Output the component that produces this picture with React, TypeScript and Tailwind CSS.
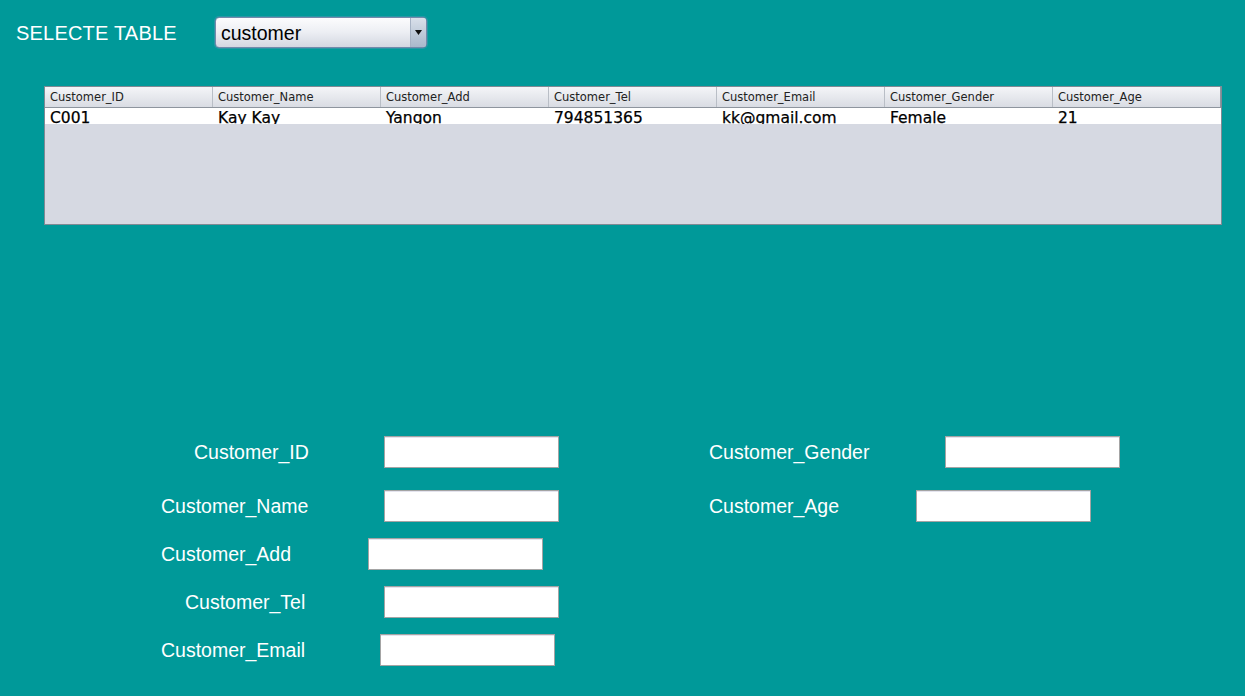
import React from "react";

const cols = [
  ["Customer_ID", "C001"],
  ["Customer_Name", "Kay Kay"],
  ["Customer_Add", "Yangon"],
  ["Customer_Tel", "794851365"],
  ["Customer_Email", "kk@gmail.com"],
  ["Customer_Gender", "Female"],
  ["Customer_Age", "21"],
];

function Box() {
  return (
    <div className="w-[175px] h-[32px] bg-white border border-[#a4a4a4] shadow-[inset_0_1px_0_#e4e4ee]" />
  );
}

export default function App() {
  return (
    <div
      className="w-[1245px] h-[696px] bg-[#009999] overflow-hidden flex flex-col"
      style={{ fontFamily: '"Liberation Sans", Arial, sans-serif' }}
    >
      {/* top row */}
      <div className="flex items-center pt-[17px] pl-[16px]">
        <div className="w-[199px] text-white text-[20px] tracking-[0.2px] leading-none pt-[1px]">SELECTE TABLE</div>
        <div className="w-[212px] h-[31px] rounded-[4px] border border-[#7389ab] bg-gradient-to-b from-[#fcfcfd] via-[#eceef3] to-[#d3d7e1] flex items-stretch overflow-hidden shadow-[0_0_0_1px_rgba(120,150,190,0.35)]">
          <div className="flex-1 flex items-center pl-[5px] pt-[2px] text-[19.5px] text-black leading-none">
            customer
          </div>
          <div className="w-[16px] border-l border-[#a6b2c4] bg-gradient-to-b from-[#d9e0ea] to-[#a9b8cb] flex items-center justify-center">
            <svg width="7" height="5" viewBox="0 0 7 5">
              <polygon points="0,0 7,0 3.5,5" fill="#111" />
            </svg>
          </div>
        </div>
      </div>

      {/* table */}
      <div className="mt-[38px] ml-[44px] w-[1178px] h-[139px] border border-[#7f8a94] bg-[#d6d9e2] flex flex-col">
        <div className="flex h-[21px] border-b border-[#8e959e] bg-gradient-to-b from-[#f4f5f8] to-[#d9dce3]">
          {cols.map(([h], i) => (
            <div
              key={h}
              className={
                "w-[168px] flex items-center pl-[5px] pt-[1px] text-[11.5px] text-[#222] border-r " +
                (i === cols.length - 1 ? "border-[#8e959e]" : "border-[#b9bec6]")
              }
              style={{ fontFamily: '"DejaVu Sans", sans-serif' }}
            >
              {h}
            </div>
          ))}
        </div>
        <div className="flex h-[16px] bg-white overflow-hidden">
          {cols.map(([h, v]) => (
            <div
              key={h}
              className="w-[168px] pl-[5px] pt-[2px] text-[15.5px] leading-[16px] text-black whitespace-nowrap [-webkit-text-stroke:0.25px_black]"
              style={{ fontFamily: '"DejaVu Sans", sans-serif' }}
            >
              {v}
            </div>
          ))}
        </div>
      </div>

      {/* form */}
      <div className="mt-[211px] pl-[161px] flex flex-col text-white text-[19.5px] leading-none">
        <div className="flex items-center h-[32px]">
          <div className="w-[548px] flex items-center">
            <div className="w-[223px] pl-[33px] pt-[1px]">Customer_ID</div>
            <Box />
          </div>
          <div className="flex items-center">
            <div className="w-[236px] pt-[1px]">Customer_Gender</div>
            <Box />
          </div>
        </div>
        <div className="flex items-center h-[32px] mt-[22px]">
          <div className="w-[548px] flex items-center">
            <div className="w-[223px] pt-[1px]">Customer_Name</div>
            <Box />
          </div>
          <div className="flex items-center">
            <div className="w-[207px] pt-[1px]">Customer_Age</div>
            <Box />
          </div>
        </div>
        <div className="flex items-center h-[32px] mt-[16px]">
          <div className="w-[207px] pt-[1px]">Customer_Add</div>
          <Box />
        </div>
        <div className="flex items-center h-[32px] mt-[16px]">
          <div className="w-[223px] pl-[24px] pt-[1px]">Customer_Tel</div>
          <Box />
        </div>
        <div className="flex items-center h-[32px] mt-[16px]">
          <div className="w-[219px] pt-[1px]">Customer_Email</div>
          <Box />
        </div>
      </div>
    </div>
  );
}
